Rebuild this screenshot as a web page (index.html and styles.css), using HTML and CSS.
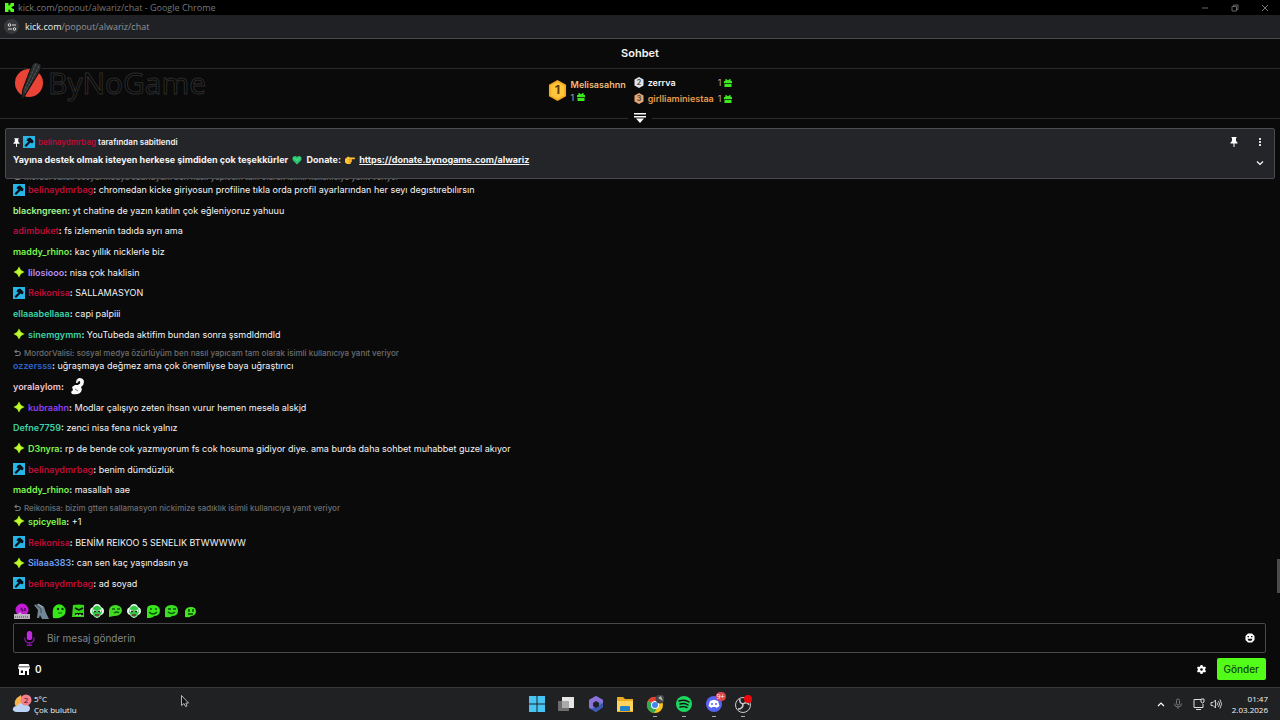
FILE: index.html
```html
<!DOCTYPE html>
<html lang="tr">
<head>
  <meta charset="UTF-8">
  <title>kick.com/popout/alwariz/chat</title>
  <link rel="stylesheet" href="styles.css">
</head>
<body>

  <!-- shared icons -->
  <svg class="defs" width="0" height="0">
    <symbol id="mod" viewBox="0 0 12 12">
      <rect width="12" height="12" fill="#27b6e6"/>
      <path d="M4.500 2.500L7 1.500l3.500 3.300-.3 2-1.400.4L7.500 6.500 3 11 1.500 9.500 5.500 5.500l-2-1z" fill="#071018"/>
    </symbol>
    <symbol id="star" viewBox="0 0 12 12">
      <path d="M6 .5l2 3.500L11.500 6 8 8 6 11.500 4 8 .5 6 4 4z" fill="#a4ee24"/>
      <path d="M6 3L9 6 6 9 3 6z" fill="#c4f82f"/>
    </symbol>
    <symbol id="gift" viewBox="0 0 8 8">
      <path d="M0 2h1.500L1 .8 2.200 0 4 1.300 5.800 0 7 .8 6.500 2H8v2.300H0zM.5 4.900h7V8h-7z" fill="#3ce81e"/>
    </symbol>
    <symbol id="pin" viewBox="0 0 8 10">
      <path d="M1.500 0h5v1H6v3l1.500 1.500V6.500h-3V10h-1V6.500h-3V5.500L2 4V1h-.5z" fill="#fff"/>
    </symbol>
    <symbol id="reply" viewBox="0 0 8 8">
      <path d="M3 .5L1 2.300l2 1.900M1.200 2.300H5a2.200 2.200 0 0 1 0 4.500H1.500" fill="none" stroke="#77797c" stroke-width="1.200"/>
    </symbol>
    <symbol id="flower" viewBox="0 0 16 16">
      <path d="M1 8q0-3 3-4 1-3 4-3t4 3q3 1 3 4t-3 4q-2 3-4 3t-4-3Q1 11 1 8z" fill="#e9f7ea"/>
      <path d="M4 5q4-5 8 0l1 4q-2 5-5 5t-5-5z" fill="#2fc944"/>
      <path d="M4 7.500l3 1M12 7.500l-3 1" stroke="#fff" stroke-width="2.200"/>
      <circle cx="6" cy="8.500" r="1" fill="#082008"/><circle cx="10" cy="8.500" r="1" fill="#082008"/>
      <path d="M6 12h4" stroke="#7b1c30" stroke-width="1.500"/>
    </symbol>
    <symbol id="smile" viewBox="0 0 16 16">
      <path d="M2 15V6q0-4 6-4t7 5q0 6-6 6-1 2-7 2z" fill="#39e61b"/>
      <path d="M6 5v2M11 5v2M4 9q4 4 8 0" fill="none" stroke="#0c510c" stroke-width="1.400"/>
    </symbol>
  </svg>

  <div class="titlebar">
    <svg class="favicon" viewBox="0 0 9 9"><path d="M0 0h3.500v2.500h1V1.500h1V0H9v3H7.500v1h-1v1h1v1H9v3H5.500V7.500h-1v-1h-1V9H0z" fill="#53fc18"/></svg>
    <span class="window-title">kick.com/popout/alwariz/chat - Google Chrome</span>
    <div class="window-buttons">
      <button aria-label="Küçült"><svg viewBox="0 0 8 8"><path d="M1 4h6" stroke="#666" fill="none"/></svg></button>
      <button aria-label="Geri yükle"><svg viewBox="0 0 8 8"><path d="M1 2.500h4.500V7H1zM2.500 2.500V1H7v4.500H5.500" stroke="#666" fill="none"/></svg></button>
      <button aria-label="Kapat"><svg viewBox="0 0 8 8"><path d="M1 1l6 6M7 1L1 7" stroke="#777" fill="none"/></svg></button>
    </div>
  </div>

  <div class="address">
    <button class="site-info" aria-label="Site bilgileri">
      <svg viewBox="0 0 10 10"><path d="M5 3h4M1 7h4" stroke="#dedede" stroke-width="1.200"/><circle cx="2.500" cy="3" r="1.300" fill="none" stroke="#dedede"/><circle cx="7.500" cy="7" r="1.300" fill="none" stroke="#dedede"/></svg>
    </button>
    <span class="url"><b>kick.com</b>/popout/alwariz/chat</span>
  </div>

  <main class="chat">
    <h1>Sohbet</h1>

    <div class="sponsor">
      <svg viewBox="0 0 30 42">
        <circle cx="15" cy="22" r="14" fill="#e94435"/>
        <path d="M21 1l6 2v5L13 31 7 41l2-13 9-24z" fill="#292c2c" stroke="#080808"/>
        <path d="M22 3L10 30M25 5L11 32" stroke="#555958" stroke-width="1" stroke-dasharray="3 1"/>
      </svg>
      <span>ByNoGame</span>
    </div>

    <section class="leaders">
      <div class="first">
        <svg class="medal" viewBox="0 0 20 22">
          <path d="M10 0l9 5v12l-9 5-9-5V5z" fill="#f5a91e"/>
          <path d="M10 2l7 4v10l-7 4-7-4V6z" fill="#ffc53d"/>
          <text x="10" y="15" text-anchor="middle">1</text>
        </svg>
        <div>
          <div class="name gold">Melisasahnn</div>
          <div class="gifts">1 <svg><use href="#gift"/></svg></div>
        </div>
      </div>
      <div class="others">
        <svg class="small-medal" viewBox="0 0 20 22"><path d="M10 0l9 5v12l-9 5-9-5V5z" fill="#e2e4e7"/><text x="10" y="16" text-anchor="middle">2</text></svg>
        <span class="name">zerrva</span>
        <span class="gifts">1 <svg><use href="#gift"/></svg></span>
        <svg class="small-medal" viewBox="0 0 20 22"><path d="M10 0l9 5v12l-9 5-9-5V5z" fill="#e8a574"/><text x="10" y="16" text-anchor="middle">3</text></svg>
        <span class="name orange">girlliaminiestaa</span>
        <span class="gifts">1 <svg><use href="#gift"/></svg></span>
      </div>
    </section>

    <div class="divider">
      <button aria-label="Sıralamayı aç"><svg viewBox="0 0 12 10"><path d="M0 0h12v1.500H0zM0 3h12v1.500H0zM2 5.500h8L6 10z" fill="#fff"/></svg></button>
    </div>

    <section class="pinned">
      <div class="pinned-text">
        <div class="pinned-by">
          <svg class="pin"><use href="#pin"/></svg>
          <svg class="badge"><use href="#mod"/></svg>
          <span><b class="red">belinaydmrbag</b> tarafından sabitlendi</span>
        </div>
        <p>Yayına destek olmak isteyen herkese şimdiden çok teşekkürler
          <svg viewBox="0 0 10 10"><path d="M5 9.500L1 5.500C-1 2 3-.5 5 2c2-2.500 6 0 4 3.500z" fill="#28c76f"/><path d="M2 2.500l3 3 3-3" stroke="#62eaa0" fill="none"/></svg>
          Donate:
          <svg viewBox="0 0 10 10"><path d="M0 4l3-2.500 2 1h4.500q1 1 0 1.800H6.500q1 .7 0 1.500.7.800-.3 1.500Q6 9 5 9H2L0 7.500z" fill="#ffc233"/><path d="M3.500 4.500h3M4 6h2.500M4 7.500h2" stroke="#d78b14" stroke-width=".6"/></svg>
          <a href="https://donate.bynogame.com/alwariz">https://donate.bynogame.com/alwariz</a></p>
      </div>
      <div class="pinned-tools">
        <button aria-label="Sabitlemeyi gizle"><svg class="pin"><use href="#pin"/></svg></button>
        <button aria-label="Menü"><svg viewBox="0 0 8 10"><path d="M3 1h2v2H3zM3 4h2v2H3zM3 7h2v2H3z" fill="#ddd"/></svg></button>
        <button class="expand" aria-label="Genişlet"><svg viewBox="0 0 8 10"><path d="M1 3.500l3 3 3-3" stroke="#fff" stroke-width="1.200" fill="none"/></svg></button>
      </div>
    </section>

    <ul class="messages">
      <li>
        <div class="reply"><svg><use href="#reply"/></svg>MordorValisi: sosyal medya özürlüyüm ben nasıl yapıcam tam olarak isimli kullanıcıya yanıt veriyor</div>
        <div class="line"><svg class="badge"><use href="#mod"/></svg><span><b><i class="red">belinaydmrbag</i>:</b> chromedan kicke giriyosun profiline tıkla orda profil ayarlarından her seyı degıstırebılırsın</span></div>
      </li>
      <li><div class="line"><span><b><i class="lime-pale">blackngreen</i>:</b> yt chatine de yazın katılın çok eğleniyoruz yahuuu</span></div></li>
      <li><div class="line"><span><b><i class="red">adimbuket</i>:</b> fs izlemenin tadıda ayrı ama</span></div></li>
      <li><div class="line"><span><b><i class="lime">maddy_rhino</i>:</b> kac yıllık nicklerle biz</span></div></li>
      <li><div class="line"><svg class="badge"><use href="#star"/></svg><span><b><i class="lilac">lilosiooo</i>:</b> nisa çok haklisin</span></div></li>
      <li><div class="line"><svg class="badge"><use href="#mod"/></svg><span><b><i class="red">Reikonisa</i>:</b> SALLAMASYON</span></div></li>
      <li><div class="line"><span><b><i class="teal">ellaaabellaaa</i>:</b> capi palpiii</span></div></li>
      <li><div class="line"><svg class="badge"><use href="#star"/></svg><span><b><i class="teal">sinemgymm</i>:</b> YouTubeda aktifim bundan sonra şsmdldmdld</span></div></li>
      <li>
        <div class="reply"><svg><use href="#reply"/></svg>MordorValisi: sosyal medya özürlüyüm ben nasıl yapıcam tam olarak isimli kullanıcıya yanıt veriyor</div>
        <div class="line"><span><b><i class="blue">ozzersss</i>:</b> uğraşmaya değmez ama çok önemliyse baya uğraştırıcı</span></div>
      </li>
      <li><div class="line"><span><b><i class="pink">yoralaylom</i>:</b></span>
        <svg class="duck" viewBox="0 0 16 18"><path d="M6 6q0-4 3-5 5 0 5 4 0 3-3 5 2 3-1 6-3 2-8 1l-1-2 2-2-1-3 3-2 3 0q3-2 2-3l-2 1z" fill="#f7f7f7"/><path d="M7 5l3-1v3z" fill="#111"/><path d="M5 12l3 2" stroke="#777"/></svg></div></li>
      <li><div class="line"><svg class="badge"><use href="#star"/></svg><span><b><i class="purple">kubraahn</i>:</b> Modlar çalışıyo zeten ihsan vurur hemen mesela alskjd</span></div></li>
      <li><div class="line"><span><b><i class="teal">Defne7759</i>:</b> zenci nisa fena nick yalnız</span></div></li>
      <li><div class="line"><svg class="badge"><use href="#star"/></svg><span><b><i class="lime">D3nyra</i>:</b> rp de bende cok yazmıyorum fs cok hosuma gidiyor diye. ama burda daha sohbet muhabbet guzel akıyor</span></div></li>
      <li><div class="line"><svg class="badge"><use href="#mod"/></svg><span><b><i class="red">belinaydmrbag</i>:</b> benim dümdüzlük</span></div></li>
      <li><div class="line"><span><b><i class="lime">maddy_rhino</i>:</b> masallah aae</span></div></li>
      <li>
        <div class="reply"><svg><use href="#reply"/></svg>Reikonisa: bizim gtten sallamasyon nickimize sadıklık isimli kullanıcıya yanıt veriyor</div>
        <div class="line"><svg class="badge"><use href="#star"/></svg><span><b><i class="lime">spicyella</i>:</b> +1</span></div>
      </li>
      <li><div class="line"><svg class="badge"><use href="#mod"/></svg><span><b><i class="red">Reikonisa</i>:</b> BENİM REIKOO 5 SENELIK BTWWWWW</span></div></li>
      <li><div class="line"><svg class="badge"><use href="#star"/></svg><span><b><i class="sky">Silaaa383</i>:</b> can sen kaç yaşındasın ya</span></div></li>
      <li><div class="line"><svg class="badge"><use href="#mod"/></svg><span><b><i class="red">belinaydmrbag</i>:</b> ad soyad</span></div></li>
    </ul>
    <div class="scroll-thumb"></div>

    <div class="emotes">
      <button aria-label="emote 1"><svg viewBox="0 0 16 16"><circle cx="8" cy="7" r="6.500" fill="#c31bd3"/><path d="M7 5l2 3M11 5v3" stroke="#52085f" stroke-width="1.500"/><path d="M0 11h4l2-2 2 2h8v5H0z" fill="#b9b3bd"/><path d="M1 14h14" stroke="#444" stroke-dasharray="1 1"/></svg></button>
      <button aria-label="emote 2"><svg viewBox="0 0 16 16"><path d="M1 2l5-1 5 3 2 6 3 6H9l-2-4-1 3H4l1-8z" fill="#718796"/><path d="M3 2l5 4v4" stroke="#3c4c58" fill="none"/><path d="M5 1l5 3" stroke="#a3adb3"/></svg></button>
      <button aria-label="emote 3"><svg viewBox="0 0 16 16"><path d="M2 15Q1 7 3 4q3-4 8-2 5 3 3 9-3 5-12 4z" fill="#36e818"/><circle cx="7" cy="6" r="1.200" fill="#073607"/><circle cx="11.500" cy="6" r="1.200" fill="#073607"/><path d="M7 10h4" stroke="#0d650a"/></svg></button>
      <button aria-label="emote 4"><svg viewBox="0 0 16 16"><path d="M3 2q6-1 11 0v12H2z" fill="#36d61b"/><path d="M5 5l4 2M13 5L9 7M5 11h8" stroke="#071b07" stroke-width="1.800"/><path d="M6 12h6" stroke="#ddd" stroke-dasharray="2 1"/></svg></button>
      <button aria-label="emote 5"><svg><use href="#flower"/></svg></button>
      <button aria-label="emote 6"><svg viewBox="0 0 16 16"><path d="M2 14V7q1-5 7-5 6 1 6 6-1 5-8 5z" fill="#43da24"/><path d="M5 6h3M10 6h3M7 10q3-2 5 0" fill="none" stroke="#125b0b" stroke-width="1.500"/></svg></button>
      <button aria-label="emote 7"><svg><use href="#flower"/></svg></button>
      <button aria-label="emote 8"><svg><use href="#smile"/></svg></button>
      <button aria-label="emote 9"><svg viewBox="0 0 16 16"><path d="M2 14V6q1-4 7-4t6 6q0 5-6 5-1 2-7 1z" fill="#39df20"/><path d="M5 6h3M10 6h3M5 9q4 3 7 0" fill="none" stroke="#0c510c" stroke-width="1.400"/></svg></button>
      <button aria-label="emote 10"><svg viewBox="0 0 16 16"><path d="M3 14V8q1-4 6-4t5 5q-1 4-5 4-1 2-6 1z" fill="#43e61b"/><path d="M7 6v3M11 6v3M6 11h5" stroke="#09400a" stroke-width="1.400"/></svg></button>
    </div>

    <form class="composer">
      <label for="message" aria-label="Mesaj">
        <svg viewBox="0 0 10 14"><rect x="2.500" y="0" width="5" height="8.500" rx="2.500" fill="#c02be0"/><path d="M.7 6v1.500a4.300 3.500 0 0 0 8.600 0V6M5 11v2.500M2.500 13.300h5" stroke="#8b12ab" stroke-width="1.200" fill="none"/></svg>
      </label>
      <input type="text" id="message" placeholder="Bir mesaj gönderin">
      <button type="button" aria-label="Emoji"><svg viewBox="0 0 10 10"><path d="M3 .5h4L9.500 3v4L7 9.500H3L.5 7V3z" fill="#fff"/><path d="M2.500 3h1.500v1.300H2.500zM6 3h1.500v1.300H6zM2.500 5.700h5L6.500 7.700h-3z" fill="#111"/></svg></button>
    </form>

    <div class="actions">
      <button class="points"><svg viewBox="0 0 12 12"><path fill-rule="evenodd" d="M1.500 1h9L12 3.500H0zM0 4.200h12v1.600h-1V12H9V8H7v4H1V5.800H0zM2.800 7.500V10H5V7.500z" fill="#fff"/></svg>0</button>
      <button class="settings" aria-label="Ayarlar"><svg viewBox="0 0 10 10"><path fill-rule="evenodd" d="M4 0h2l.4 1.500 1.200.6L9 1.700l1 1.700L9 4.500v1l1 1.100-1 1.700-1.400-.4-1.200.6L6 10H4l-.4-1.500-1.200-.6L1 8.300 0 6.600l1-1.100v-1L0 3.400l1-1.700 1.400.4 1.200-.6zM5 3.500a1.500 1.500 0 1 0 0 3 1.500 1.500 0 0 0 0-3z" fill="#fff"/></svg></button>
      <button class="send">Gönder</button>
    </div>
  </main>

  <footer class="taskbar">
    <div class="weather">
      <svg viewBox="0 0 20 20"><path d="M9 1Q0 6 4 13l7-2z" fill="#f6b34c"/><path d="M4 18q-4-1-3-4 1-2 4-2 3-5 7-1 5-1 6 3 0 4-4 4z" fill="#bcd3f5"/><circle cx="14" cy="6" r="5.500" fill="#f27f8e"/><text x="14" y="9" text-anchor="middle">2</text></svg>
      <div><div>5°C</div><div>Çok bulutlu</div></div>
    </div>
    <nav class="apps">
      <button aria-label="Başlat"><svg viewBox="0 0 18 18"><path d="M1 1h7.500v7.500H1zM9.500 1H17v7.500H9.500zM1 9.500h7.500V17H1zM9.500 9.500H17V17H9.500z" fill="#48c5f5"/></svg></button>
      <button aria-label="Görev görünümü"><svg viewBox="0 0 18 18"><path d="M1 6h11v10H1z" fill="#6d6d6d"/><path d="M5 2h12v11H5z" fill="#e5e5e5"/><path d="M5 6h7v7H5z" fill="#aaa"/></svg></button>
      <button aria-label="Microsoft 365"><svg viewBox="0 0 18 18"><path d="M9 1l7 4v7l-7 5-7-4V5z" fill="#537ad8"/><path d="M9 1l7 4v4l-5-3-5 3v5L2 12V5z" fill="#8d70d8"/><path d="M16 8v4l-7 5-5-3 7-3z" fill="#3d57b0"/><path d="M9 6l3 2v3l-3 2-3-2V8z" fill="#202124"/></svg></button>
      <button aria-label="Dosya Gezgini"><svg viewBox="0 0 18 18"><path d="M1 2h6l2 2h8v13H1z" fill="#eaaa22"/><path d="M1 6h16v10H1z" fill="#ffd45c"/><path d="M4 12q0-1 1-1h8q1 0 1 1v4H4z" fill="#2383c9"/></svg></button>
      <button class="open" aria-label="Chrome"><svg viewBox="0 0 18 18"><circle cx="9" cy="10" r="8" fill="#f9c31b"/><path d="M9 10L2 6a8 8 0 0 1 14 0z" fill="#e54033"/><path d="M9 10L2 6a8 8 0 0 0 6 12l4-6z" fill="#35a853"/><circle cx="9" cy="10" r="4" fill="#fff"/><circle cx="9" cy="10" r="3" fill="#4285f4"/><circle cx="14" cy="4" r="4.500" fill="#444"/><path d="M12 3l3-2 2 5z" fill="#bbb"/></svg></button>
      <button class="open" aria-label="Spotify"><svg viewBox="0 0 18 18"><circle cx="9" cy="9" r="8" fill="#1ed760"/><path d="M4 6q6-2 10 1M5 9q5-1.500 8 1M5 12q4-1 7 .5" fill="none" stroke="#111" stroke-width="1.400" stroke-linecap="round"/></svg></button>
      <button class="open" aria-label="Discord"><svg viewBox="0 0 18 18"><circle cx="9" cy="9" r="8" fill="#5865f2"/><path d="M5 6l3-1h2l3 1 1.500 5-3 2-1-1h-3l-1 1-3-2z" fill="#fff"/><circle cx="7" cy="9" r="1" fill="#5865f2"/><circle cx="11" cy="9" r="1" fill="#5865f2"/></svg><span class="count">9+</span></button>
      <button class="open" aria-label="OBS"><svg viewBox="0 0 18 18"><circle cx="9" cy="10" r="7.500" fill="#202124" stroke="#ccc"/><path d="M9 9Q5 8 6 4M9 9q4-3 6 1M9 9q0 5-5 5" fill="none" stroke="#ccc" stroke-width="1.500"/><circle cx="14" cy="4" r="4" fill="#e9090d"/></svg></button>
    </nav>
    <div class="tray">
      <button aria-label="Gizli simgeler"><svg viewBox="0 0 12 12"><path d="M3 8l3-3 3 3" fill="none" stroke="#fff" stroke-width="1.200"/></svg></button>
      <svg viewBox="0 0 12 12"><rect x="4.500" y="1" width="3" height="6" rx="1.500" fill="none" stroke="#777"/><path d="M2.500 5.500q0 3.500 3.500 3.500t3.500-3.500M6 9v2" fill="none" stroke="#777"/></svg>
      <svg class="network" viewBox="0 0 12 12"><path d="M8 1.500H1v8h9V6M3 11.500h5M8 1h3v3L9.500 5 8 4z" fill="none" stroke="#ddd"/></svg>
      <svg viewBox="0 0 12 12"><path d="M1 4.500h2L5.500 2v8L3 7.500H1zM7 4.500q1 1.500 0 3M8.500 3q2 3 0 6M10 1.500q3 4.500 0 9" fill="none" stroke="#ddd" stroke-width=".9"/></svg>
      <div class="clock"><div>01:47</div><div>2.03.2026</div></div>
    </div>
    <svg class="cursor" viewBox="0 0 8 12"><path d="M.5.5v10L3 8.500 4.500 11.500 6 11 4.800 8h2.700z" fill="#111" stroke="#ddd" stroke-width=".8"/></svg>
  </footer>

</body>
</html>
```
FILE: styles.css
```css
* {
  box-sizing: border-box;
}
body {
  margin: 0;
  height: 100vh;
  display: flex;
  flex-direction: column;
  background: #0a0a0a;
  color: #f4f4f4;
  font-family: Inter, sans-serif;
  font-size: 9px;
  position: relative;
}
button {
  border: none;
  background: none;
  padding: 0;
  color: inherit;
  font-family: inherit;
  display: flex;
  align-items: center;
  justify-content: center;
  cursor: pointer;
}
svg {
  flex: none;
}
.defs {
  position: absolute;
}

/* browser window */
.titlebar {
  height: 15px;
  display: flex;
  align-items: center;
  padding: 0 11px 0 5px;
  background: #000;
  color: #777;
  font-family: "Open Sans", sans-serif;
}
.favicon {
  width: 9px;
  height: 9px;
  margin-right: 4px;
}
.window-title {
  flex: 1;
}
.window-buttons {
  display: flex;
  gap: 22px;
}
.window-buttons svg {
  width: 8px;
  height: 8px;
}
.address {
  height: 24px;
  display: flex;
  align-items: center;
  gap: 6px;
  padding-left: 4px;
  background: #202124;
  border-bottom: 1px solid #48494b;
  color: #919396;
  font-family: "Open Sans", sans-serif;
}
.address b {
  color: #eee;
  font-weight: 500;
}
.site-info {
  width: 15px;
  height: 15px;
  border-radius: 50%;
  background: #37393b;
}
.site-info svg {
  width: 10px;
  height: 10px;
}

/* chat header */
.chat {
  flex: 1;
  min-height: 0;
  display: flex;
  flex-direction: column;
  position: relative;
}
h1 {
  margin: 0;
  height: 30px;
  line-height: 29px;
  border-bottom: 1px solid #27292b;
  text-align: center;
  font-size: 11px;
  font-weight: 600;
}
.sponsor {
  position: absolute;
  left: 14px;
  top: 22px;
  display: flex;
  align-items: center;
  gap: 4px;
  font-family: "Open Sans", sans-serif;
  font-size: 30px;
  font-weight: 500;
  color: #050505;
  -webkit-text-stroke: 1px #2b2b2b;
}
.sponsor svg {
  width: 30px;
  height: 42px;
}
.leaders {
  height: 43px;
  display: flex;
  align-items: center;
  justify-content: center;
  gap: 8px;
}
.first {
  display: flex;
  align-items: center;
  gap: 4px;
  line-height: 13px;
}
.medal {
  width: 19px;
  height: 21px;
}
.medal text {
  font-size: 13px;
  font-weight: 700;
  fill: #5e3a05;
}
.small-medal {
  width: 10px;
  height: 11px;
}
.small-medal text {
  font-size: 14px;
  font-weight: 700;
  fill: #54483f;
}
.others {
  display: grid;
  grid-template-columns: auto 1fr auto;
  align-items: center;
  gap: 3px 4px;
  line-height: 13px;
}
.name {
  font-weight: 600;
}
.gold {
  color: #efbd79;
}
.orange {
  color: #e9994a;
}
.gifts {
  display: flex;
  align-items: center;
  gap: 3px;
  color: #aaa;
}
.gifts svg {
  width: 8px;
  height: 8px;
}
.divider {
  height: 12px;
  display: flex;
  align-items: center;
  gap: 6px;
}
.divider::before,
.divider::after {
  content: "";
  flex: 1;
  height: 1px;
  background: #2b2d2f;
}
.divider svg {
  width: 12px;
  height: 10px;
}

/* pinned message */
.pinned {
  margin: 4px 5px 0;
  height: 51px;
  padding: 6px 7px;
  display: flex;
  justify-content: space-between;
  background: #232528;
  border: 1px solid #4a4c4f;
  border-radius: 2px;
  position: relative;
  z-index: 1;
}
.pinned-by {
  display: flex;
  align-items: center;
  gap: 3px;
  height: 14px;
  font-size: 8px;
  font-weight: 600;
}
.pinned-by b {
  font-weight: 600;
}
.pinned p {
  margin: 2px 0 0;
  line-height: 17px;
  font-weight: 700;
}
.pinned p svg {
  width: 10px;
  height: 10px;
  margin: 0 2px;
  vertical-align: -2px;
}
.pinned a {
  color: inherit;
}
.pin {
  width: 7px;
  height: 9px;
}
.badge {
  width: 12px;
  height: 12px;
}
.pinned-tools {
  display: grid;
  grid-template-columns: 14px 14px;
  grid-template-rows: 14px 14px;
  gap: 7px 12px;
}
.pinned-tools svg {
  width: 8px;
  height: 10px;
}
.expand {
  grid-column: 2;
}

/* messages */
.messages {
  flex: 1;
  min-height: 0;
  margin: -8px 0 0;
  padding: 0 13px;
  list-style: none;
  display: flex;
  flex-direction: column;
  justify-content: space-between;
}
.line {
  height: 15px;
  display: flex;
  align-items: center;
  gap: 3px;
}
.line b {
  font-weight: 600;
}
.line i {
  font-style: normal;
}
.reply {
  height: 11px;
  display: flex;
  align-items: center;
  gap: 3px;
  padding-left: 1px;
  color: #6c6e71;
  font-size: 8px;
  font-weight: 500;
}
.reply svg {
  width: 7px;
  height: 8px;
}
.duck {
  width: 16px;
  height: 18px;
  margin-left: 3px;
}
.red {
  color: #bd0c38;
}
.lime {
  color: #7cf44b;
}
.lime-pale {
  color: #a5f58a;
}
.lilac {
  color: #b58df5;
}
.teal {
  color: #3bd3a5;
}
.blue {
  color: #2d63c9;
}
.pink {
  color: #efc0cc;
}
.purple {
  color: #8f3ff0;
}
.sky {
  color: #6f9ff0;
}
.scroll-thumb {
  position: absolute;
  right: 0;
  bottom: 94px;
  width: 3px;
  height: 34px;
  background: #4a4b4d;
}

/* message box */
.emotes {
  width: 184px;
  height: 16px;
  margin: 12px 0 4px 14px;
  display: flex;
  justify-content: space-between;
}
.emotes svg {
  width: 16px;
  height: 16px;
}
.composer {
  height: 30px;
  margin: 0 14px 0 13px;
  padding: 0 10px;
  display: flex;
  align-items: center;
  border: 1px solid #47494b;
  border-radius: 2px;
}
.composer label {
  display: flex;
}
.composer label svg {
  width: 11px;
  height: 15px;
}
.composer input {
  flex: 1;
  margin: 0 12px;
  padding: 0;
  border: none;
  outline: none;
  background: none;
  color: #fff;
  font-family: inherit;
  font-size: 10px;
}
.composer input::placeholder {
  color: #85878a;
}
.composer button svg {
  width: 10px;
  height: 10px;
}
.actions {
  height: 34px;
  padding: 0 14px 2px 18px;
  display: flex;
  align-items: center;
}
.points {
  gap: 5px;
  margin-right: auto;
  font-size: 10px;
  font-weight: 600;
}
.points svg {
  width: 12px;
  height: 12px;
}
.settings {
  margin-right: 11px;
}
.settings svg {
  width: 9px;
  height: 9px;
}
.send {
  height: 22px;
  padding: 0 7px;
  background: #53fc18;
  border-radius: 2px;
  color: #0d4510;
  font-size: 10px;
  font-weight: 500;
}

/* taskbar */
.taskbar {
  height: 33px;
  padding: 0 12px;
  display: grid;
  grid-template-columns: 1fr 224px 1fr;
  align-items: center;
  background: #202122;
  border-top: 1px solid #373839;
  font-family: "Open Sans", sans-serif;
  font-size: 8px;
  line-height: 11px;
  position: relative;
}
.weather {
  display: flex;
  align-items: center;
  gap: 2px;
}
.weather svg {
  width: 20px;
  height: 20px;
}
.weather text {
  font-size: 8px;
  fill: #3b1116;
}
.apps {
  display: flex;
  justify-content: space-between;
}
.apps button {
  position: relative;
}
.apps svg {
  width: 18px;
  height: 18px;
}
.open::after {
  content: "";
  position: absolute;
  bottom: -4px;
  width: 4px;
  height: 1px;
  background: #aaa;
}
.count {
  position: absolute;
  right: -3px;
  top: -3px;
  padding: 0 1px;
  border-radius: 5px;
  background: #e0464f;
  font-size: 7px;
  line-height: 9px;
}
.tray {
  display: flex;
  align-items: center;
  justify-content: flex-end;
  gap: 5px;
}
.tray svg {
  width: 12px;
  height: 12px;
}
.tray .network {
  margin-left: 4px;
}
.clock {
  margin-left: 5px;
  text-align: right;
}
.cursor {
  position: absolute;
  left: 181px;
  top: 7px;
  width: 8px;
  height: 12px;
}
```
